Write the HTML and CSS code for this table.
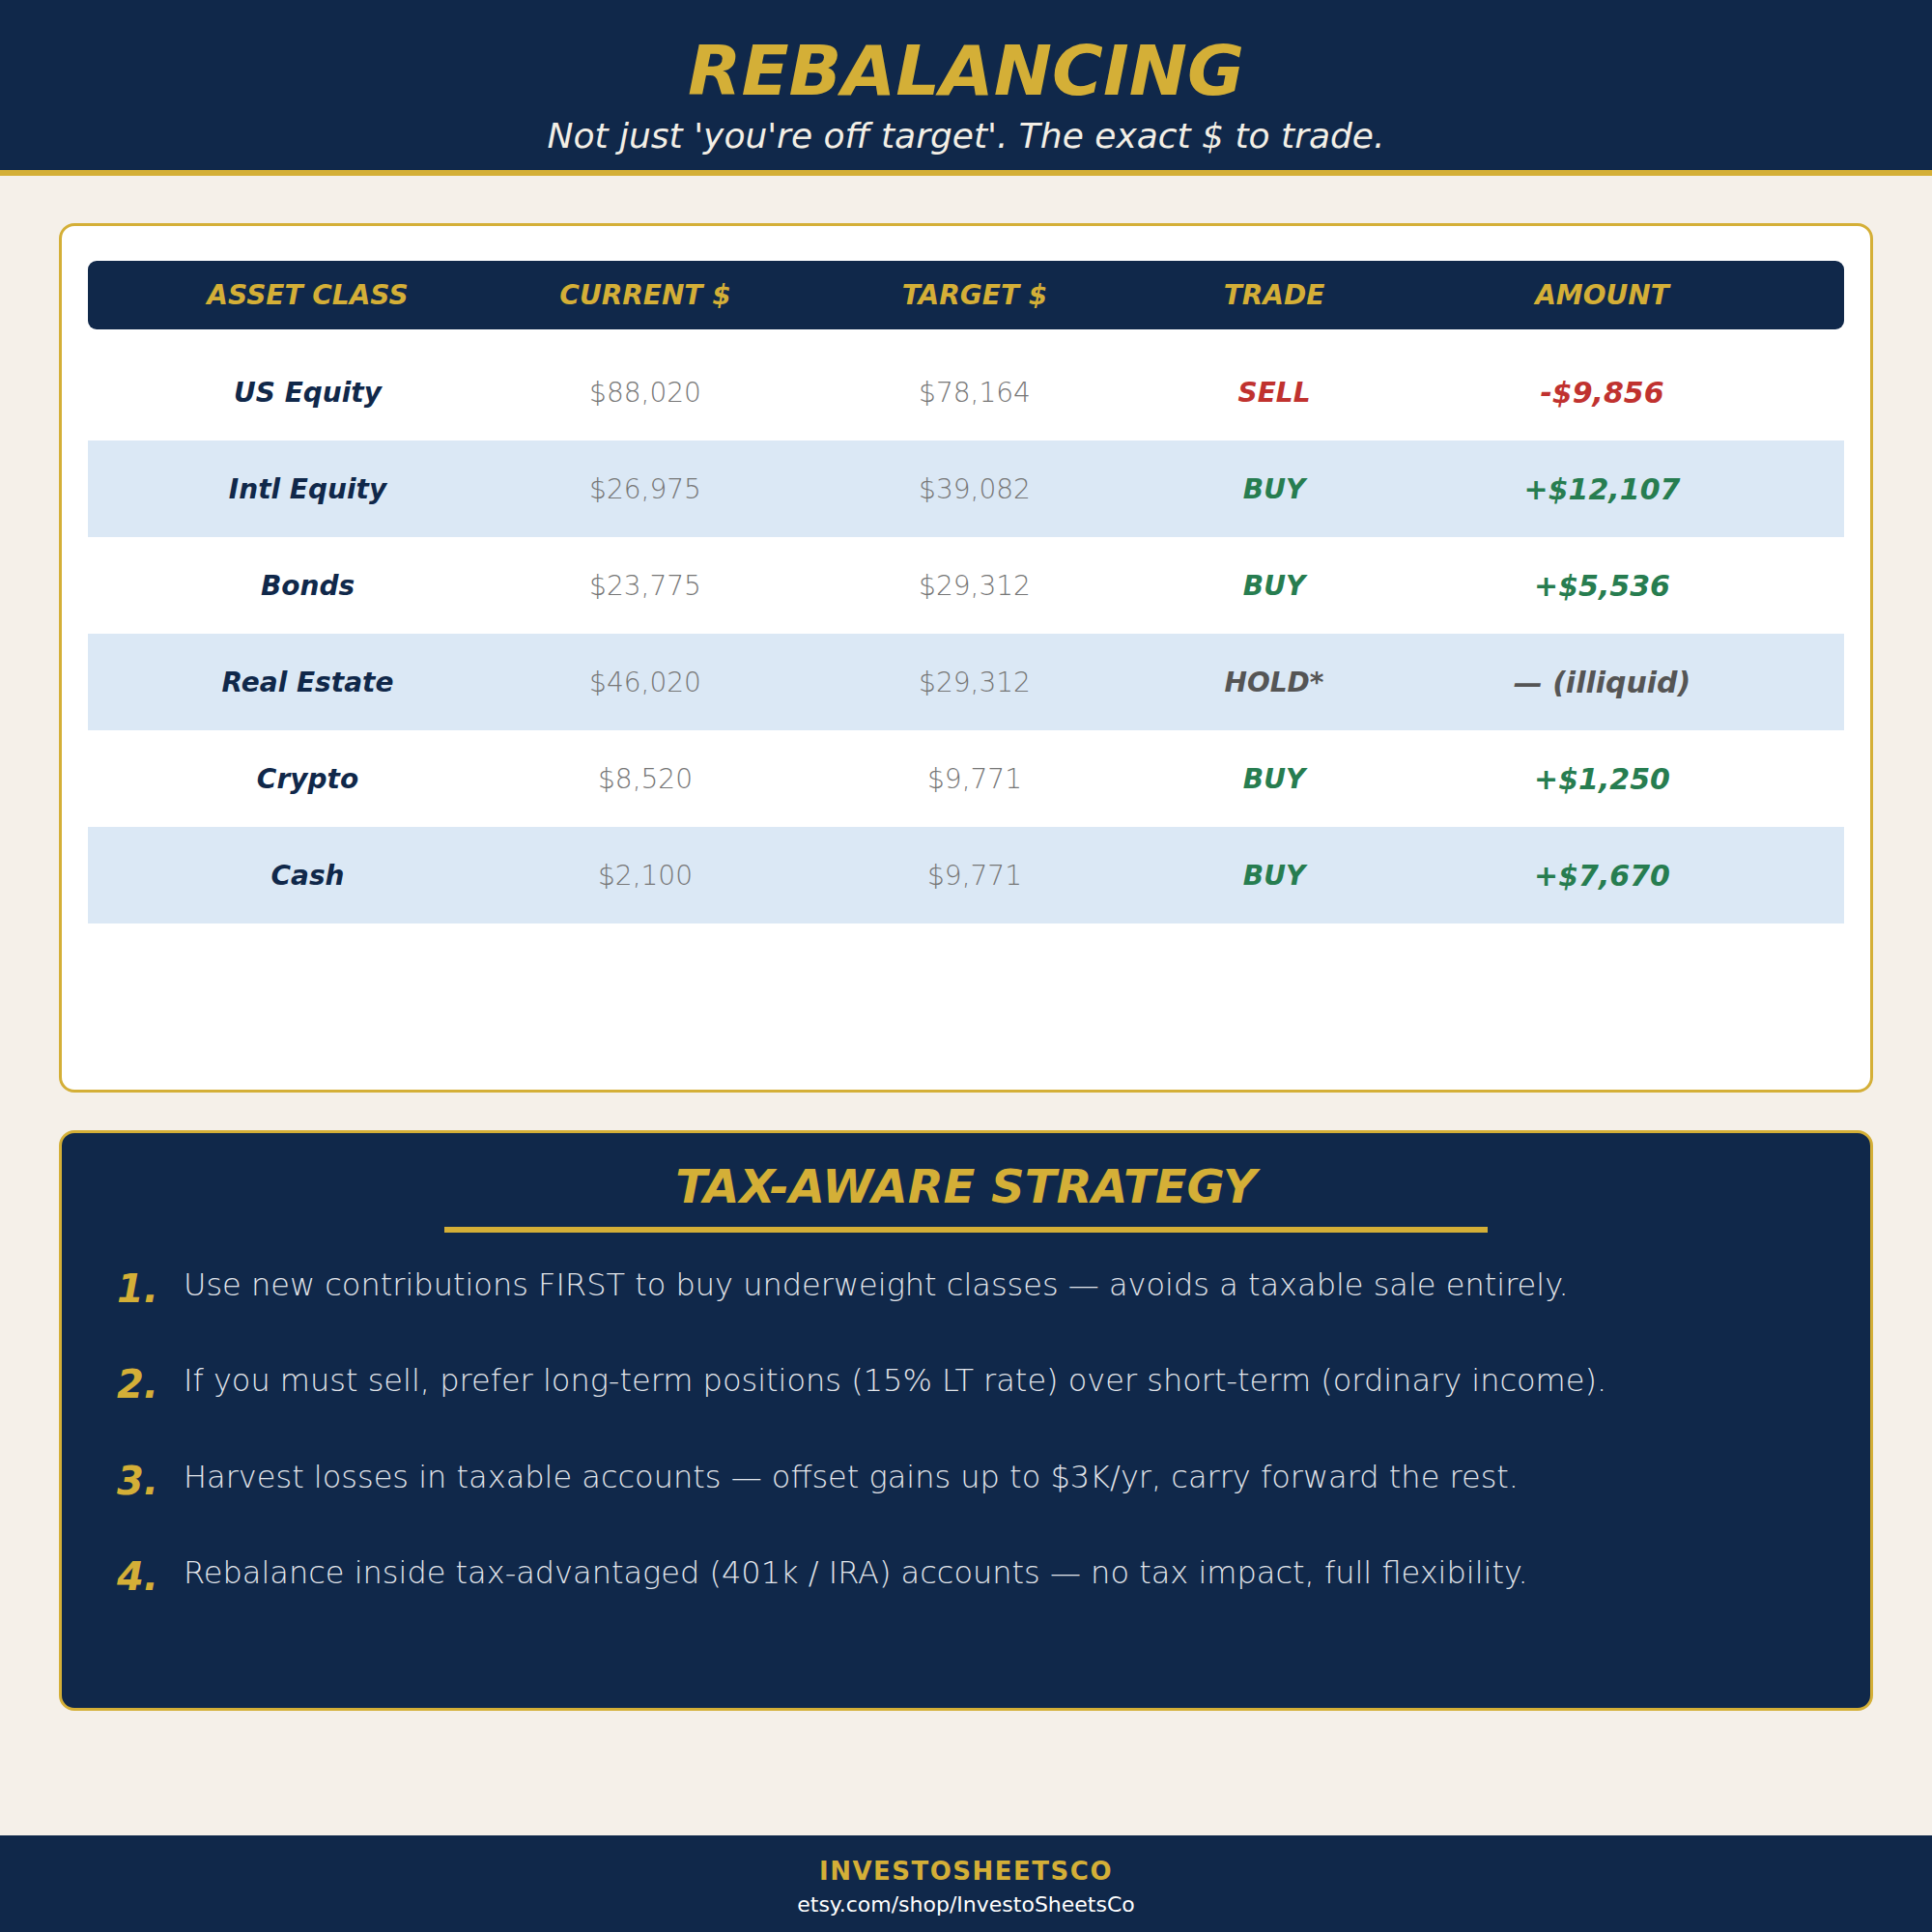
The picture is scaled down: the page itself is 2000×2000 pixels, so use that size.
FILE: index.html
```html
<!DOCTYPE html>
<html lang="en">
<head>
<meta charset="utf-8">
<title>Rebalancing</title>
<link rel="stylesheet" href="styles.css">
</head>
<body>
<div class="page">
  <header class="hero">
    <h1 class="hero-title">REBALANCING</h1>
    <p class="hero-sub">Not just 'you're off target'. The exact $ to trade.</p>
  </header>

  <main class="main">
    <section class="card">
      <div class="table">
        <div class="thead">
          <div>ASSET CLASS</div>
          <div>CURRENT $</div>
          <div>TARGET $</div>
          <div>TRADE</div>
          <div>AMOUNT</div>
        </div>
        <div class="rows">
          <div class="row">
            <div class="asset">US Equity</div>
            <div class="num">$88,020</div>
            <div class="num">$78,164</div>
            <div class="trade sell">SELL</div>
            <div class="amt sell">-$9,856</div>
          </div>
          <div class="row alt">
            <div class="asset">Intl Equity</div>
            <div class="num">$26,975</div>
            <div class="num">$39,082</div>
            <div class="trade buy">BUY</div>
            <div class="amt buy">+$12,107</div>
          </div>
          <div class="row">
            <div class="asset">Bonds</div>
            <div class="num">$23,775</div>
            <div class="num">$29,312</div>
            <div class="trade buy">BUY</div>
            <div class="amt buy">+$5,536</div>
          </div>
          <div class="row alt">
            <div class="asset">Real Estate</div>
            <div class="num">$46,020</div>
            <div class="num">$29,312</div>
            <div class="trade hold">HOLD*</div>
            <div class="amt hold">— (illiquid)</div>
          </div>
          <div class="row">
            <div class="asset">Crypto</div>
            <div class="num">$8,520</div>
            <div class="num">$9,771</div>
            <div class="trade buy">BUY</div>
            <div class="amt buy">+$1,250</div>
          </div>
          <div class="row alt">
            <div class="asset">Cash</div>
            <div class="num">$2,100</div>
            <div class="num">$9,771</div>
            <div class="trade buy">BUY</div>
            <div class="amt buy">+$7,670</div>
          </div>
        </div>
      </div>
    </section>

    <section class="strategy">
      <h2 class="strategy-title">TAX-AWARE STRATEGY</h2>
      <div class="strategy-rule"></div>
      <ol class="steps">
        <li class="step"><span class="step-num">1.</span><span class="step-text">Use new contributions FIRST to buy underweight classes — avoids a taxable sale entirely.</span></li>
        <li class="step"><span class="step-num">2.</span><span class="step-text">If you must sell, prefer long-term positions (15% LT rate) over short-term (ordinary income).</span></li>
        <li class="step"><span class="step-num">3.</span><span class="step-text">Harvest losses in taxable accounts — offset gains up to $3K/yr, carry forward the rest.</span></li>
        <li class="step"><span class="step-num">4.</span><span class="step-text">Rebalance inside tax-advantaged (401k / IRA) accounts — no tax impact, full flexibility.</span></li>
      </ol>
    </section>
  </main>

  <footer class="footer">
    <div class="brand">INVESTOSHEETSCO</div>
    <div class="url">etsy.com/shop/InvestoSheetsCo</div>
  </footer>
</div>
</body>
</html>
```

FILE: styles.css
```css
* { box-sizing: border-box; }

html, body {
  margin: 0;
  padding: 0;
}

body {
  font-family: "DejaVu Sans", "Liberation Sans", sans-serif;
  background: #f5f0e9;
}

.page {
  width: 2000px;
  height: 2000px;
  display: flex;
  flex-direction: column;
  background: #f5f0e9;
}

/* ---------- header ---------- */
.hero {
  height: 182px;
  background: #10284a;
  border-bottom: 6px solid #d4af37;
  display: flex;
  flex-direction: column;
  align-items: center;
  padding-top: 37px;
}

.hero-title {
  margin: 0;
  font-size: 72px;
  line-height: 72px;
  font-weight: bold;
  font-style: italic;
  color: #d4af37;
}

.hero-sub {
  margin: 14px 0 0;
  font-size: 36px;
  line-height: 36px;
  font-style: italic;
  font-weight: normal;
  color: #f3efe6;
}

/* ---------- main ---------- */
.main {
  flex: 1;
  display: flex;
  flex-direction: column;
}

.card {
  margin: 49px 61px 0;
  height: 900px;
  background: #ffffff;
  border: 3px solid #d4af37;
  border-radius: 16px;
  padding: 36px 27px 0;
}

.thead,
.row {
  display: grid;
  grid-template-columns: 455px 244px 438px 182px 497px;
  align-items: center;
  text-align: center;
}

.thead {
  height: 71px;
  background: #10284a;
  border-radius: 9px;
  color: #d4af37;
  font-size: 28px;
  font-weight: bold;
  font-style: italic;
}

.rows {
  margin-top: 15px;
}

.row {
  height: 100px;
}

.row.alt {
  background: #dbe8f5;
}

.asset {
  font-size: 28px;
  font-weight: bold;
  font-style: italic;
  color: #10284a;
}

.num {
  font-size: 28px;
  font-weight: 200;
  color: #767676;
}

.trade {
  font-size: 28px;
  font-weight: bold;
  font-style: italic;
}

.amt {
  font-size: 30px;
  font-weight: bold;
  font-style: italic;
}

.sell { color: #c0322f; }
.buy { color: #277d50; }
.hold { color: #555555; }

/* ---------- strategy ---------- */
.strategy {
  margin: 39px 61px 0;
  height: 601px;
  background: #10284a;
  border: 3px solid #d4af37;
  border-radius: 16px;
  padding: 31px 0 0 57px;
  display: flex;
  flex-direction: column;
}

.strategy-title {
  margin: 0 0 0 -57px;
  font-size: 48px;
  line-height: 48px;
  font-weight: bold;
  font-style: italic;
  color: #d4af37;
  text-align: center;
}

.strategy-rule {
  align-self: center;
  width: 1080px;
  height: 6px;
  margin: 18px 0 0 -57px;
  background: #d4af37;
}

.steps {
  list-style: none;
  margin: 35px 0 0;
  padding: 0;
  display: flex;
  flex-direction: column;
  gap: 53.4px;
}

.step {
  display: flex;
  align-items: flex-start;
}

.step-num {
  width: 69px;
  flex: none;
  font-size: 40px;
  font-weight: bold;
  font-style: italic;
  color: #d4af37;
}

.step-text {
  font-size: 32px;
  font-weight: 200;
  color: #e2e5ea;
}

/* ---------- footer ---------- */
.footer {
  height: 100px;
  background: #10284a;
  display: flex;
  flex-direction: column;
  align-items: center;
  padding-top: 22px;
}

.brand {
  font-size: 26px;
  font-weight: bold;
  letter-spacing: 1.5px;
  color: #d4af37;
}

.url {
  margin-top: 7px;
  font-size: 22px;
  color: #ffffff;
}
```
